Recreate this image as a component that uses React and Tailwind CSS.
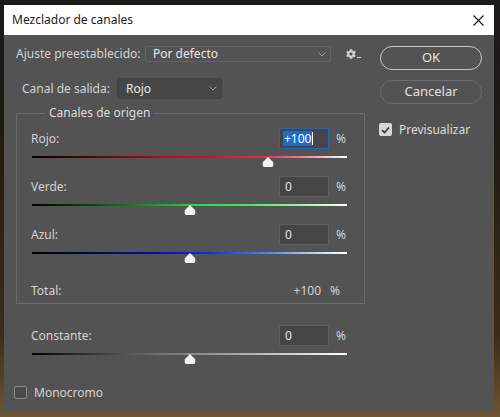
import { FaCog } from "react-icons/fa";

const font = "font-['Noto_Sans','Liberation_Sans',sans-serif]";

function Chevron() {
  return (
    <svg width="8" height="5" viewBox="0 0 8 5" className="shrink-0">
      <path d="M0.5 0.5 L4 4 L7.5 0.5" fill="none" stroke="#a0a0a0" strokeWidth="1" />
    </svg>
  );
}

function Thumb() {
  return (
    <svg width="11" height="10" viewBox="0 0 11 10">
      <path d="M5.5 0 L11 5.5 L11 8 Q11 10 9 10 L2 10 Q0 10 0 8 L0 5.5 Z" fill="#f2f2f2" />
    </svg>
  );
}

function Slider({ label, value, active, track, thumb }) {
  return (
    <div>
      <div className="flex h-[21px] items-center justify-between">
        <span className="-ml-[1px]">{label}</span>
        <div className="flex items-center">
          {active ? (
            <div className="flex h-[21px] w-[50px] items-center border border-[#2a64b0] bg-[#454545] pl-[3px]">
              <span className="bg-[#1d6ad2] px-[1px] leading-[15px] text-white">{value}</span>
              <span className="h-[13px] w-[1px] bg-white" />
            </div>
          ) : (
            <div className="flex h-[21px] w-[50px] items-center border border-[#5e5e5e] bg-[#454545] pl-[5px] text-[#e6e6e6]">
              {value}
            </div>
          )}
          <span className="ml-[7px] w-[11px]">%</span>
        </div>
      </div>
      <div className={`relative mt-[7px] h-[2px] ${track}`}>
        <div className={`absolute top-[1px] -translate-x-1/2 ${thumb}`}>
          <Thumb />
        </div>
      </div>
    </div>
  );
}

export default function App() {
  return (
    <div className={`h-[417px] w-[500px] overflow-hidden bg-[linear-gradient(180deg,#1b1b1b_0%,#1e1a14_30%,#3b2c18_80%,#6e5632_100%)] pl-[4px] pt-[5px] text-[12px] text-[#d2d2d2] ${font}`}>
      <div className="w-[490px]">
        {/* title bar */}
        <div className="flex h-[30px] items-center justify-between bg-white pl-[8px] pr-[10px] text-[#1a1a1a]">
          <span className="text-[12px]">Mezclador de canales</span>
          <svg width="11" height="11" viewBox="0 0 11 11">
            <path d="M0.5 0.5 L10.5 10.5 M10.5 0.5 L0.5 10.5" stroke="#111" strokeWidth="1.1" />
          </svg>
        </div>

        {/* body */}
        <div className="flex h-[376px] gap-[15px] bg-[#535353] pl-[12px] pt-[11px]">
          {/* left column */}
          <div className="flex w-[349px] flex-col">
            <div className="flex h-[16px] items-center">
              <span className="w-[129px] whitespace-nowrap">Ajuste preestablecido:</span>
              <div className="flex h-[16px] w-[186px] items-center justify-between rounded-[2px] border border-[#646464] pl-[7px] pr-[4px] text-[#e6e6e6]">
                <span>Por defecto</span>
                <Chevron />
              </div>
              <div className="ml-[15px] flex items-end gap-[1px] text-[#cfcfcf]">
                <FaCog size={10} />
                <span className="mb-[1px] h-[1px] w-[4px] bg-[#cfcfcf]" />
              </div>
            </div>

            <div className="mt-[16px] flex h-[21px] items-center">
              <span className="w-[101px] whitespace-nowrap pl-[6px]">Canal de salida:</span>
              <div className="flex h-[21px] w-[105px] items-center justify-between rounded-[3px] border border-[#424242] bg-[#464646] pl-[8px] pr-[4px] text-[#e6e6e6]">
                <span>Rojo</span>
                <Chevron />
              </div>
            </div>

            <fieldset className="mt-[6px] border border-[#6a6a6a] pb-[2px] pl-[15px] pr-[17px] pt-[7px]">
              <legend className="ml-[13px] px-[4px] leading-[16px] text-[#dcdcdc]">Canales de origen</legend>
              <div className="flex flex-col gap-[18px]">
                <Slider
                  label="Rojo:"
                  value="+100"
                  active
                  track="bg-[linear-gradient(90deg,#000000_0%,#5a0608_20%,#b00c14_40%,#e0101e_58%,#e8305a_75%,#f4a0b4_90%,#ffffff_100%)]"
                  thumb="left-[75%]"
                />
                <Slider
                  label="Verde:"
                  value="0"
                  track="bg-[linear-gradient(90deg,#000000_0%,#05500c_20%,#0fa022_38%,#1ee03a_52%,#38ee5a_68%,#9ef4aa_85%,#ffffff_100%)]"
                  thumb="left-[50%]"
                />
                <Slider
                  label="Azul:"
                  value="0"
                  track="bg-[linear-gradient(90deg,#000000_0%,#000858_20%,#0010b8_40%,#0a28f0_55%,#3a78f8_72%,#b4c8f6_88%,#ffffff_100%)]"
                  thumb="left-[50%]"
                />
              </div>
              <div className="mt-[26px] flex h-[21px] items-center justify-between">
                <span className="-ml-[1px]">Total:</span>
                <div className="flex items-center pr-[7px]">
                  <span>+100</span>
                  <span className="ml-[9px]">%</span>
                </div>
              </div>
            </fieldset>

            <div className="mt-[21px] pl-[16px] pr-[18px]">
              <Slider
                label="Constante:"
                value="0"
                track="bg-[linear-gradient(90deg,#000000_0%,#2a2a2a_15%,#707070_40%,#a8a8a8_65%,#d8d8d8_85%,#ffffff_100%)]"
                thumb="left-[50%]"
              />
            </div>

            <div className="-ml-[2px] mt-[31px] flex h-[13px] items-center gap-[7px]">
              <span className="h-[13px] w-[13px] rounded-[2px] border border-[#8a8a8a] bg-[#4a4a4a]" />
              <span>Monocromo</span>
            </div>
          </div>

          {/* right column */}
          <div className="flex w-[102px] flex-col">
            <button className="h-[24px] rounded-full border-[1.5px] border-[#c8c8c8] text-[13px] text-[#e6e6e6]">
              OK
            </button>
            <button className="mt-[10px] h-[24px] rounded-full border-[1.5px] border-[#6e6e6e] text-[13px] text-[#e0e0e0]">
              Cancelar
            </button>
            <div className="-ml-[1px] mt-[19px] flex h-[13px] items-center gap-[7px]">
              <span className="flex h-[13px] w-[13px] items-center justify-center rounded-[2px] bg-[#d6d6d6]">
                <svg width="9" height="8" viewBox="0 0 9 8">
                  <path d="M1 4 L3.5 6.5 L8 1.5" fill="none" stroke="#333" strokeWidth="1.6" />
                </svg>
              </span>
              <span className="text-[#dcdcdc]">Previsualizar</span>
            </div>
          </div>
        </div>
      </div>
    </div>
  );
}
